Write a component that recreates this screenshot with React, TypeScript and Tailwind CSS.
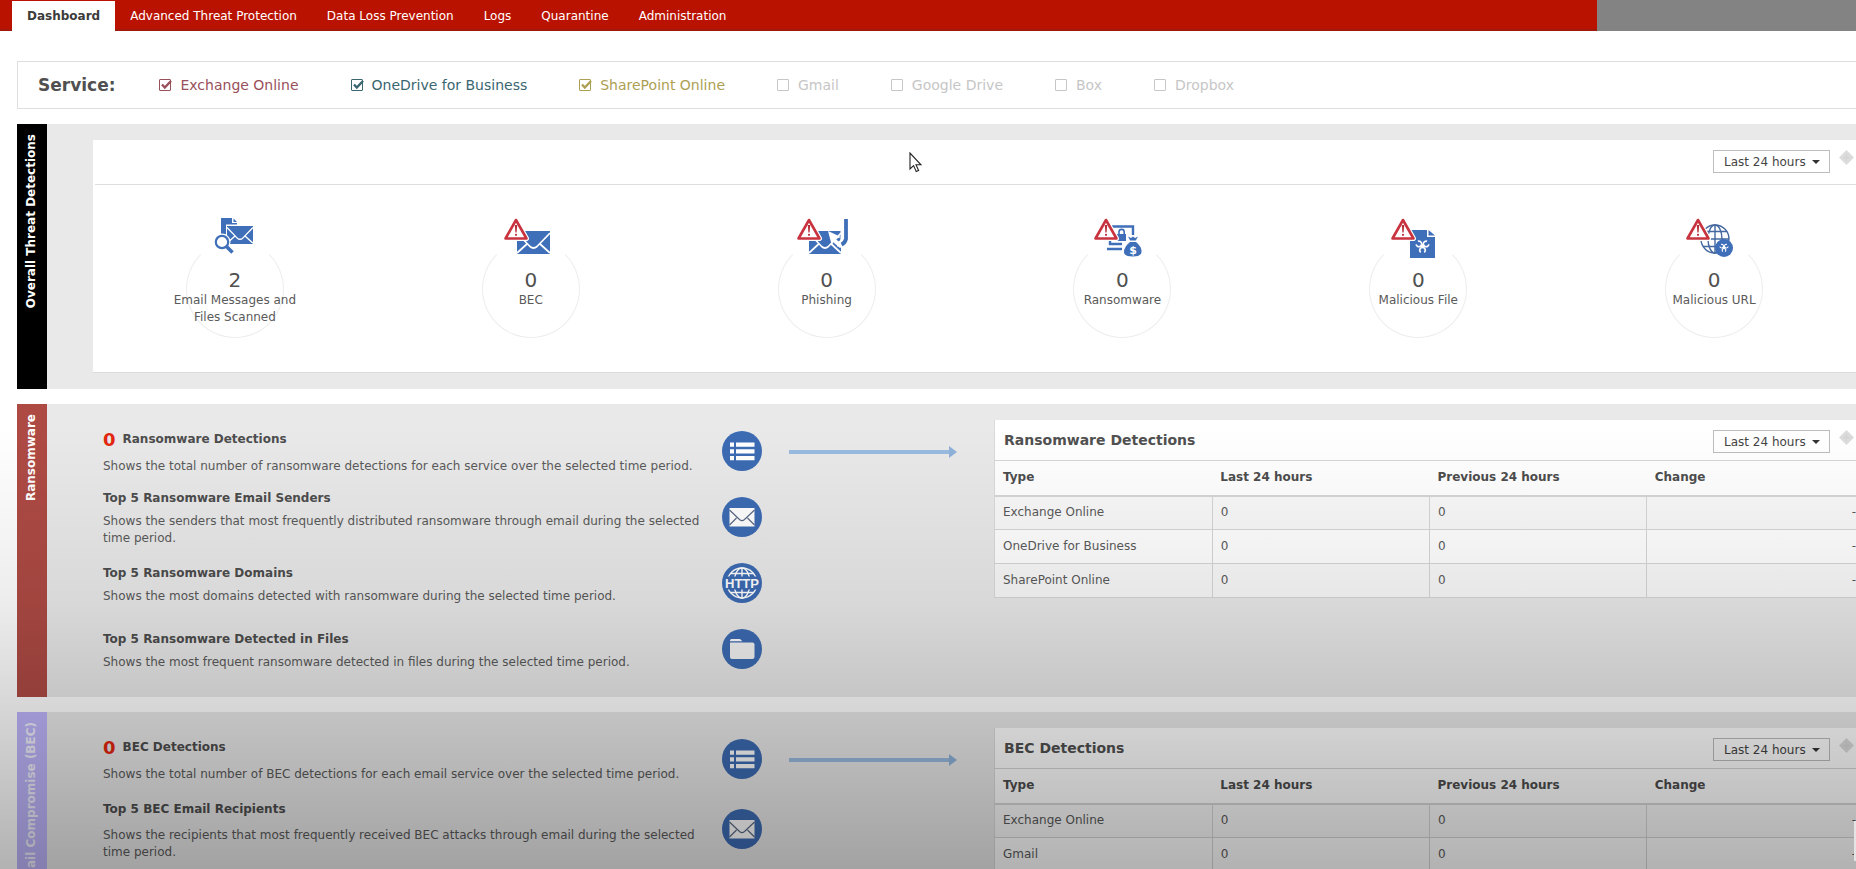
import { useState, type ReactNode } from 'react';

const BLUE = '#3f6fb8';

const NAV = ['Dashboard', 'Advanced Threat Protection', 'Data Loss Prevention', 'Logs', 'Quarantine', 'Administration'];

const SERVICES = [
  { name: 'Exchange Online', on: true, color: 'text-[#98505a]' },
  { name: 'OneDrive for Business', on: true, color: 'text-[#3a6670]' },
  { name: 'SharePoint Online', on: true, color: 'text-[#ada053]' },
  { name: 'Gmail', on: false, color: 'text-[#c6c6c6]' },
  { name: 'Google Drive', on: false, color: 'text-[#c6c6c6]' },
  { name: 'Box', on: false, color: 'text-[#c6c6c6]' },
  { name: 'Dropbox', on: false, color: 'text-[#c6c6c6]' },
];

/* ---------- icons ---------- */

function Warning({ x }: { x: number }) {
  return (
    <g transform={`translate(${x} 1)`}>
      <path d="M12 2 L22.5 20.5 H1.5 Z" fill="#fff" stroke="#fff" strokeWidth="5" strokeLinejoin="round" />
      <path d="M12 2 L22.5 20.5 H1.5 Z" fill="#fff" stroke="#c8333f" strokeWidth="2.6" strokeLinejoin="round" />
      <path d="M10.8 7 h2.4 l-.6 7.4 h-1.2 Z" fill="#b52f3a" />
      <circle cx="12" cy="16.8" r="1.1" fill="#b52f3a" />
    </g>
  );
}

function Envelope({ x, y, w, h }: { x: number; y: number; w: number; h: number }) {
  return (
    <svg x={x} y={y} width={w} height={h} viewBox="0 0 33 23" preserveAspectRatio="none">
      <rect width="33" height="23" fill={BLUE} />
      <path d="M0 2 L13 15.5 Q16.5 18.5 20 15.5 L33 2 M0 22 L10.5 12.5 M33 22 L22.5 12.5" fill="none" stroke="#fff" strokeWidth="1.7" />
    </svg>
  );
}

// biohazard trefoil, centred on 0,0
function Hazard({ x, y, s }: { x: number; y: number; s: number }) {
  return (
    <g transform={`translate(${x} ${y}) scale(${s})`} fill="none" stroke="#fff" strokeWidth="2.4">
      {[60, 180, 300].map((r) => (
        <path key={r} transform={`rotate(${r})`} d="M-2.6 -9 A4 4 0 1 0 2.6 -9" />
      ))}
      <circle r="3" fill="#fff" stroke="none" />
    </g>
  );
}

function StatIcon({ children }: { children: ReactNode }) {
  return (
    <svg className="relative h-[42px] w-[60px]" viewBox="0 0 60 42" aria-hidden="true">
      {children}
    </svg>
  );
}

const STATS = [
  {
    value: 2,
    label: 'Email Messages and Files Scanned',
    icon: (
      <StatIcon>
        <path d="M16 1 H27 V6 H32 V27 H16 Z" fill={BLUE} />
        <path d="M28.5 1.5 L32 5 H28.5 Z" fill={BLUE} />
        <rect x="21" y="7.5" width="28.5" height="21" fill="#fff" />
        <Envelope x={22} y={9} w={26} h={18} />
        <circle cx="17" cy="25" r="8.5" fill="#fff" />
        <path d="M21 29 L27.5 35.5" stroke="#fff" strokeWidth="6" />
        <circle cx="17" cy="25" r="6.2" fill="#fff" stroke={BLUE} strokeWidth="2.2" />
        <path d="M21.5 29.5 L27.5 35.5" stroke={BLUE} strokeWidth="3.6" />
      </StatIcon>
    ),
  },
  {
    value: 0,
    label: 'BEC',
    icon: (
      <StatIcon>
        <Envelope x={16} y={14} w={33} h={23} />
        <Warning x={3} />
      </StatIcon>
    ),
  },
  {
    value: 0,
    label: 'Phishing',
    icon: (
      <StatIcon>
        <Envelope x={12} y={14} w={32} h={23} />
        <path d="M46 3 V21 Q46 27 40 27" fill="none" stroke="#fff" strokeWidth="5" />
        <path d="M31 14 L44 20 L39 22 L46 29 L43 31 L36 25 L35 29 Z" fill="#fff" />
        <path d="M49 2 V22 Q48 26 44.5 27.5" fill="none" stroke={BLUE} strokeWidth="3.8" />
        <Warning x={0} />
      </StatIcon>
    ),
  },
  {
    value: 0,
    label: 'Ransomware',
    icon: (
      <StatIcon>
        <path d="M18 9.5 H41 V20 M18 9 V27 H30 M15 32 H30" fill="none" stroke={BLUE} strokeWidth="2.4" />
        <rect x="25" y="17" width="9" height="7" fill={BLUE} />
        <path d="M27 17 V15 a2.6 2.6 0 0 1 5.2 0 V17" fill="none" stroke={BLUE} strokeWidth="1.6" />
        <path d="M34 18 H48 L45 24 Q51 30 50.5 35 Q50 41 40 41 Q30 41 30 35 Q30 30 37 24 Z" fill="#fff" />
        <path d="M36 19.5 L39 21 L41 19.5 L43 21 L46 19.5 L43.8 23.5 H38.2 Z" fill={BLUE} />
        <path d="M38 25 H44 Q50 30 49.5 35 Q49 39.5 41 39.5 Q32 39.5 32 35 Q32 30 38 25 Z" fill={BLUE} />
        <text x="41" y="36.5" textAnchor="middle" fontSize="11" fontWeight="bold" fill="#fff">$</text>
        <Warning x={2} />
      </StatIcon>
    ),
  },
  {
    value: 0,
    label: 'Malicious File',
    icon: (
      <StatIcon>
        <path d="M22 13 H39 V20 H47 V41 H22 Z" fill={BLUE} />
        <path d="M40.5 13 L47 18.5 H40.5 Z" fill={BLUE} />
        <Hazard x={34.5} y={29} s={0.7} />
        <Warning x={3} />
      </StatIcon>
    ),
  },
  {
    value: 0,
    label: 'Malicious URL',
    icon: (
      <StatIcon>
        <g fill="none" stroke="#44689f" strokeWidth="1.4">
          <circle cx="31" cy="22" r="14" />
          <ellipse cx="31" cy="22" rx="7" ry="14" />
          <path d="M31 8 V36 M17 22 H45 M19 14.5 H43 M19 29.5 H43" />
        </g>
        <circle cx="40" cy="31" r="9" fill={BLUE} />
        <Hazard x={40} y={30.5} s={0.45} />
        <Warning x={2} />
      </StatIcon>
    ),
  },
];

type RoundKind = 'list' | 'mail' | 'http' | 'folder';

function RoundIcon({ kind }: { kind: RoundKind }) {
  return (
    <svg className="size-10 shrink-0" viewBox="0 0 40 40" aria-hidden="true">
      <circle cx="20" cy="20" r="20" fill="#3c6bb3" />
      {kind === 'list' && (
        <path d="M8 11.5h4v4.2h-4z M14 11.5h18.5v4.2H14z M8 18.2h4v4.2h-4z M14 18.2h18.5v4.2H14z M8 25h4v4.2h-4z M14 25h18.5v4.2H14z" fill="#fff" />
      )}
      {kind === 'mail' && (
        <>
          <rect x="7.5" y="11" width="25" height="18.5" fill="#fff" />
          <path d="M7.5 13 L17.5 22.5 Q20 24.6 22.5 22.5 L32.5 13 M7.5 28 L14.5 21 M32.5 28 L25.5 21" fill="none" stroke="#5a6a85" strokeWidth="1.2" />
        </>
      )}
      {kind === 'http' && (
        <>
          <g fill="none" stroke="#fff" strokeWidth="1.4">
            <circle cx="20" cy="20" r="15" />
            <ellipse cx="20" cy="20" rx="8" ry="15" />
            <path d="M20 5 V35 M8.5 10.5 H31.5 M8.5 29.5 H31.5" />
          </g>
          <rect x="2" y="13.5" width="36" height="13" fill="#3c6bb3" />
          <text x="20" y="24.5" textAnchor="middle" fontSize="13" fontWeight="bold" fontFamily="Liberation Sans, sans-serif" fill="#fff">HTTP</text>
        </>
      )}
      {kind === 'folder' && (
        <>
          <path d="M8 13 V11.5 Q8 10 9.5 10 H18 L20.5 12.2 H8 Z" fill="#fff" />
          <path d="M8 13.6 H30.5 Q32.5 13.6 32.5 15.5 V28 Q32.5 30 30.5 30 H10 Q8 30 8 28 Z" fill="#f3f3f3" />
        </>
      )}
    </svg>
  );
}

function Arrow() {
  return (
    <div className="flex h-3 items-center">
      <span className="h-1 flex-1 bg-[#98bbdf]" />
      <svg className="h-3 w-2" viewBox="0 0 8 12" aria-hidden="true">
        <path d="M0 0 L8 6 L0 12 Z" fill="#8fb2da" />
      </svg>
    </div>
  );
}

/* ---------- shared pieces ---------- */

function PeriodTools({ id }: { id: string }) {
  return (
    <div className="ml-auto flex items-start gap-[9px] pt-[10px] pr-[10px]">
      <div className="relative">
        <select
          id={id}
          aria-label="Period"
          className="h-[23px] w-[117px] appearance-none border border-[#bdbdbd] bg-white pl-[10px] text-xs text-[#444]"
        >
          <option>Last 24 hours</option>
        </select>
        <svg className="pointer-events-none absolute top-[10px] right-[10px] h-1 w-2" viewBox="0 0 8 4" aria-hidden="true">
          <path d="M0 0 H8 L4 4 Z" fill="#333" />
        </svg>
      </div>
      <svg className="size-[15px]" viewBox="0 0 15 15" aria-hidden="true">
        <path d="M7.5 0 L15 7.5 L7.5 15 L0 7.5 Z" fill="#dcdcdc" />
        <path d="M7.5 4 V11 M4 7.5 H11" stroke="#d2d2d2" strokeWidth="1" />
      </svg>
    </div>
  );
}

function Section({ title, strip, children }: { title: string; strip: string; children: ReactNode }) {
  return (
    <section className="mt-[15px] flex bg-[#e9e9e9]">
      <div className={`flex w-[30px] shrink-0 items-start justify-center pt-[10px] pr-0.5 ${strip}`}>
        <h2 className="rotate-180 text-xs font-bold whitespace-nowrap [writing-mode:vertical-rl]">{title}</h2>
      </div>
      {children}
    </section>
  );
}

type Item = { title: string; text: string; icon: RoundKind; count?: number; row: string; gap: string };

function DetectionSection(props: { title: string; strip: string; heading: string; items: Item[]; rows: string[] }) {
  return (
    <Section title={props.title} strip={props.strip}>
      <div className="grid flex-1 grid-cols-[659fr_232fr_870fr] pl-14">
        <div className="pt-[14px] pb-[15px]">
          {props.items.map((item) => (
            <div key={item.title} className={`flex items-center gap-2 ${item.row}`}>
              <div className={`flex flex-1 flex-col ${item.gap}`}>
                {item.count === undefined ? (
                  <h3 className="font-bold text-[#4d4d4d]">{item.title}</h3>
                ) : (
                  <h3 className="flex h-6 items-center gap-[7px] font-bold text-[#4d4d4d]">
                    <span className="text-lg text-[#e3260f]">{item.count}</span>
                    {item.title}
                  </h3>
                )}
                <p>{item.text}</p>
              </div>
              <RoundIcon kind={item.icon} />
            </div>
          ))}
        </div>

        <div className="pt-[42px] pr-[37px] pl-[27px]">
          <Arrow />
        </div>

        <div className="pt-4">
          <div className="border-l border-[#dadada] bg-white">
            <div className="flex h-10">
              <h3 className="self-center pl-[9px] text-sm font-bold text-[#505050]">{props.heading}</h3>
              <PeriodTools id={`period-${props.heading}`} />
            </div>
            <table className="w-full table-fixed border-collapse text-left">
              <thead>
                <tr className="h-[35px] border-t border-b-2 border-[#d6d6d6] text-[#4d4d4d]">
                  {['Type', 'Last 24 hours', 'Previous 24 hours', 'Change'].map((h) => (
                    <th key={h} className="px-2 font-bold">{h}</th>
                  ))}
                </tr>
              </thead>
              <tbody>
                {props.rows.map((name) => (
                  <tr key={name} className="h-[34px] border-b border-[#d6d6d6] odd:bg-[#f9f9f9]">
                    <td className="px-2">{name}</td>
                    <td className="border-l border-[#d6d6d6] px-2">0</td>
                    <td className="border-l border-[#d6d6d6] px-2">0</td>
                    <td className="border-l border-[#d6d6d6] px-2 text-right">-</td>
                  </tr>
                ))}
              </tbody>
            </table>
          </div>
        </div>
      </div>
    </Section>
  );
}

function ServiceBox({ name, on, color }: { name: string; on: boolean; color: string }) {
  const [checked, setChecked] = useState(on);
  return (
    <label className={`flex items-center gap-[9px] ${color}`}>
      <span className="relative flex size-3">
        <input
          type="checkbox"
          checked={checked}
          disabled={!on}
          onChange={(e) => setChecked(e.target.checked)}
          className="size-3 appearance-none rounded-[1px] border border-current"
        />
        {checked && (
          <svg className="pointer-events-none absolute top-0 left-0 h-3 w-[14px]" viewBox="0 0 14 12" aria-hidden="true">
            <path d="M3 5.5 L5.8 8.5 L12 2" fill="none" stroke="currentColor" strokeWidth="2.4" />
          </svg>
        )}
      </span>
      {name}
    </label>
  );
}

/* ---------- page ---------- */

export default function App() {
  return (
    <div className='relative h-screen overflow-hidden bg-white text-xs leading-[17px] text-[#5a5a5a] font-["DejaVu_Sans",Verdana,sans-serif]'>
      <nav className="flex h-[31px] bg-[#ba1200]">
        <div className="flex flex-1 items-stretch border-b-2 border-[#a01a0c] pl-3">
          {NAV.map((item, i) => (
            <a
              key={item}
              href="#"
              className={
                i === 0
                  ? 'mt-px -mb-0.5 flex items-center bg-white px-[15px] font-bold text-[#3c3c3c]'
                  : 'flex items-center px-[15px] pt-[3px] text-white'
              }
            >
              {item}
            </a>
          ))}
        </div>
        <div className="w-[259px] bg-[#838383]" />
      </nav>

      {/* content runs slightly under the right edge */}
      <main className="-mr-2 pl-[17px]">
        <form className="mt-[30px] flex h-12 items-center border border-[#dedede] pl-5 text-sm">
          <span className="mr-11 text-[17px] font-bold text-[#505050]">Service:</span>
          <div className="flex gap-[52px]">
            {SERVICES.map((s) => (
              <ServiceBox key={s.name} {...s} />
            ))}
          </div>
        </form>

        <Section title="Overall Threat Detections" strip="bg-black text-white">
          <div className="flex-1 pt-4 pb-4 pl-[46px]">
            <div className="border-b border-[#dcdce0] bg-white">
              <div className="ml-0.5 flex h-[45px] border-b border-[#dedede]">
                <PeriodTools id="period-overall" />
              </div>
              <div className="mr-0.5 -ml-1.5 grid grid-cols-6">
                {STATS.map((s) => (
                  <div key={s.label} className="relative flex flex-col items-center pt-8 pb-[46px] text-center">
                    <span className="absolute top-[55px] size-[98px] rounded-full border border-[#ededed] border-t-transparent" />
                    {s.icon}
                    <span className="relative mt-[9px] text-xl leading-6 text-[#505050]">{s.value}</span>
                    <span className="relative w-[130px]">{s.label}</span>
                  </div>
                ))}
              </div>
            </div>
          </div>
        </Section>

        <DetectionSection
          title="Ransomware"
          strip="bg-[#ae4a44] text-white"
          heading="Ransomware Detections"
          rows={['Exchange Online', 'OneDrive for Business', 'SharePoint Online']}
          items={[
            {
              title: 'Ransomware Detections',
              text: 'Shows the total number of ransomware detections for each service over the selected time period.',
              icon: 'list',
              count: 0,
              row: 'h-[66px]',
              gap: 'gap-1.5',
            },
            {
              title: 'Top 5 Ransomware Email Senders',
              text: 'Shows the senders that most frequently distributed ransomware through email during the selected time period.',
              icon: 'mail',
              row: 'h-[66px]',
              gap: 'gap-1.5 pt-[3px]',
            },
            {
              title: 'Top 5 Ransomware Domains',
              text: 'Shows the most domains detected with ransomware during the selected time period.',
              icon: 'http',
              row: 'h-[66px]',
              gap: 'gap-1.5 pt-[3px]',
            },
            {
              title: 'Top 5 Ransomware Detected in Files',
              text: 'Shows the most frequent ransomware detected in files during the selected time period.',
              icon: 'folder',
              row: 'h-[66px]',
              gap: 'gap-1.5 pt-[3px]',
            },
          ]}
        />

        <DetectionSection
          title="Business Email Compromise (BEC)"
          strip="bg-[#bdb5fb] text-[#f0eefc]"
          heading="BEC Detections"
          rows={['Exchange Online', 'Gmail']}
          items={[
            {
              title: 'BEC Detections',
              text: 'Shows the total number of BEC detections for each email service over the selected time period.',
              icon: 'list',
              count: 0,
              row: 'h-[66px]',
              gap: 'gap-1.5',
            },
            {
              title: 'Top 5 BEC Email Recipients',
              text: 'Shows the recipients that most frequently received BEC attacks through email during the selected time period.',
              icon: 'mail',
              row: 'h-[74px]',
              gap: 'gap-[9px] pt-[3px]',
            },
          ]}
        />
      </main>

      {/* shade over the lower half */}
      <div className="pointer-events-none absolute inset-0 bg-[linear-gradient(to_bottom,transparent_49%,rgba(0,0,0,0.07)_69%,rgba(0,0,0,0.15)_80%,rgba(0,0,0,0.3)_100%)]" />
      <div className="absolute right-0 bottom-2 h-10 w-0.5 bg-[#e4e4e4]" />

      {/* mouse pointer */}
      <svg className="pointer-events-none absolute top-[152px] left-[909px] h-[21px] w-[13px]" viewBox="0 0 13 21" aria-hidden="true">
        <path d="M1 1 V17 L4.6 13.6 L7.2 19.6 L9.6 18.5 L7 12.8 H12 Z" fill="#fff" stroke="#222" strokeWidth="1.1" />
      </svg>
    </div>
  );
}
